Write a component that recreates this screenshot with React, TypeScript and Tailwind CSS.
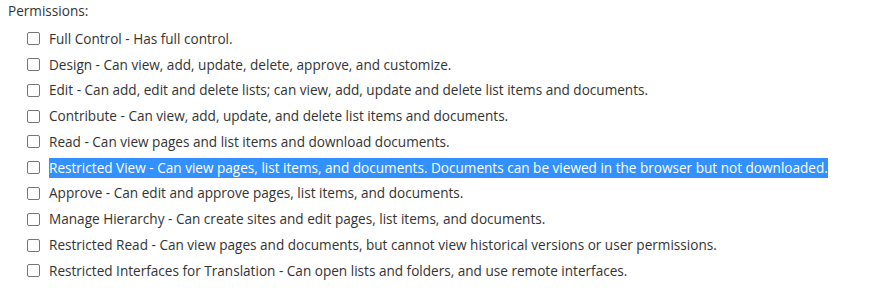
import React from "react";

const items = [
  "Full Control - Has full control.",
  "Design - Can view, add, update, delete, approve, and customize.",
  "Edit - Can add, edit and delete lists; can view, add, update and delete list items and documents.",
  "Contribute - Can view, add, update, and delete list items and documents.",
  "Read - Can view pages and list items and download documents.",
  "Restricted View - Can view pages, list items, and documents. Documents can be viewed in the browser but not downloaded.",
  "Approve - Can edit and approve pages, list items, and documents.",
  "Manage Hierarchy - Can create sites and edit pages, list items, and documents.",
  "Restricted Read - Can view pages and documents, but cannot view historical versions or user permissions.",
  "Restricted Interfaces for Translation - Can open lists and folders, and use remote interfaces.",
];

export default function App() {
  return (
    <div
      className="w-[872px] h-[295px] bg-white text-[#333333] text-[13.58px] pl-2 pt-[1px]"
      style={{ fontFamily: '"Open Sans", "Noto Sans", sans-serif' }}
    >
      <div className="h-[20px] leading-[20px]">Permissions:</div>
      <div className="pl-[19px] pt-[5px]">
        {items.map((t, i) => (
          <div key={i} className="flex items-center h-[25.78px]">
            <span className="w-[13px] h-[13px] border border-[#767676] rounded-[2px] bg-white shrink-0" />
            <span
              className={
                "ml-[9px] leading-[20px] whitespace-nowrap " +
                (i === 5 ? "bg-[#3390ff] text-white" : "")
              }
            >
              {t}
            </span>
          </div>
        ))}
      </div>
    </div>
  );
}
